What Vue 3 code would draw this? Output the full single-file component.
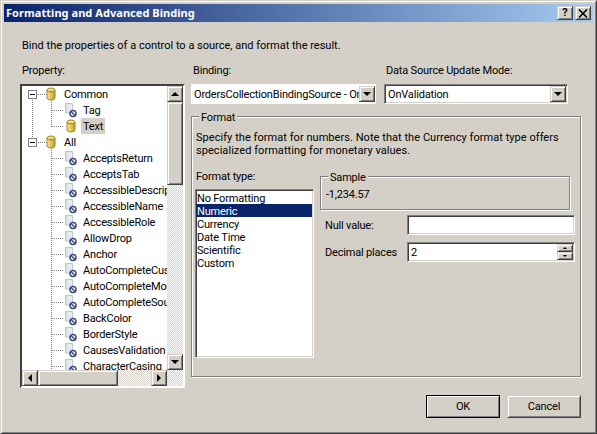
<template>
  <div class="dialog">
    <div class="titlebar">
      <span class="title">Formatting and Advanced Binding</span>
      <div class="title-btns">
        <button class="cap-btn raised">?</button>
        <button class="cap-btn raised">
          <svg width="10" height="9" viewBox="0 0 10 9"><path d="M1 0.5 L9 8.5 M9 0.5 L1 8.5" stroke="#000" stroke-width="1.6" /></svg>
        </button>
      </div>
    </div>

    <p class="intro">Bind the properties of a control to a source, and format the result.</p>

    <div class="columns">
      <div class="prop-col">
        <div class="lbl">Property:</div>
        <div class="tree-box sunken">
          <div class="tree">
            <div v-for="row in rows" :key="row.name" class="tree-row">
              <svg class="row-art" :width="row.depth ? 59 : 40" height="16">
                <!-- outer guide for the Common group -->
                <path v-if="row.outer" d="M10.5 0 V16" class="guide" />
                <template v-if="row.depth === 0">
                  <path d="M16 8.5 H25" class="guide" />
                  <path v-if="row.name === 'Common'" d="M10.5 12 V16" class="guide" />
                  <path v-if="row.name === 'All'" d="M10.5 0 V5" class="guide" />
                  <path d="M29.5 14 V16" class="guide" />
                  <rect x="6.5" y="4.5" width="8" height="8" fill="#fff" stroke="#808080" />
                  <path d="M8 8.5 H13" stroke="#000" />
                  <ellipse cx="29" cy="4" rx="4" ry="2" fill="#f3dc7a" stroke="#a08a30" />
                  <path d="M25 4 V12 A4 2 0 0 0 33 12 V4 A4 2 0 0 1 25 4 Z" fill="url(#gold)" stroke="#a08a30" />
                </template>
                <template v-else>
                  <path :d="row.last ? 'M29.5 0 V8.5' : 'M29.5 0 V16'" class="guide" />
                  <path d="M30 8.5 H42" class="guide" />
                  <template v-if="row.db">
                    <ellipse cx="49" cy="4" rx="4" ry="2" fill="#f3dc7a" stroke="#a08a30" />
                    <path d="M45 4 V12 A4 2 0 0 0 53 12 V4 A4 2 0 0 1 45 4 Z" fill="url(#gold)" stroke="#a08a30" />
                  </template>
                  <template v-else>
                    <path d="M43.5 1.5 H50.5 V11 H43.5 Z" fill="#e9ebf2" stroke="#c0c4d0" />
                    <path d="M45 2 V11" stroke="#ccd0da" />
                    <circle cx="51" cy="11.5" r="3" fill="#fff" stroke="#3c4a84" stroke-width="1.5" />
                    <path d="M49 9.5 L53 13.5" stroke="#3c4a84" stroke-width="1.4" />
                  </template>
                </template>
                <defs>
                  <linearGradient id="gold" x1="0" x2="1" y1="0" y2="0">
                    <stop offset="0" stop-color="#f8e88e" />
                    <stop offset="0.6" stop-color="#e2c04a" />
                    <stop offset="1" stop-color="#b8962c" />
                  </linearGradient>
                </defs>
              </svg>
              <span class="row-name" :class="{ selected: row.selected }">{{ row.name }}</span>
            </div>
          </div>

          <div class="vscroll dither">
            <button class="sb-btn raised"><i class="arrow up"></i></button>
            <div class="vthumb raised"></div>
            <div class="spacer"></div>
            <button class="sb-btn raised"><i class="arrow down"></i></button>
          </div>
          <div class="hscroll dither">
            <button class="sb-btn raised"><i class="arrow left"></i></button>
            <div class="hthumb raised"></div>
            <div class="spacer"></div>
            <button class="sb-btn raised"><i class="arrow right"></i></button>
          </div>
          <div class="corner dither"></div>
        </div>
      </div>

      <div class="right-col">
        <div class="top-row">
          <div class="binding-field">
            <div class="lbl">Binding:</div>
            <div class="combo flat">
              <span class="combo-text">OrdersCollectionBindingSource - Or</span>
              <button class="combo-btn raised"><i class="arrow down"></i></button>
            </div>
          </div>
          <div class="mode-field">
            <div class="lbl">Data Source Update Mode:</div>
            <div class="combo sunken">
              <span class="combo-text">OnValidation</span>
              <button class="combo-btn raised"><i class="arrow down"></i></button>
            </div>
          </div>
        </div>

        <div class="group format-group">
          <span class="group-title">Format</span>
          <p class="format-text">
            Specify the format for numbers. Note that the Currency format type offers<br />
            specialized formatting for monetary values.
          </p>
          <div class="format-row">
            <div class="type-col">
              <div class="type-lbl">Format type:</div>
              <ul class="type-list sunken">
                <li v-for="t in types" :key="t" :class="{ active: t === 'Numeric' }">{{ t }}</li>
              </ul>
            </div>
            <div class="detail-col">
              <div class="group sample-group">
                <span class="group-title">Sample</span>
                <div class="sample-val">-1,234.57</div>
              </div>
              <div class="field-row">
                <span class="field-lbl">Null value:</span>
                <div class="input sunken"></div>
              </div>
              <div class="field-row">
                <span class="field-lbl">Decimal places</span>
                <div class="input sunken spin-input">
                  <span class="spin-val">2</span>
                  <div class="spin">
                    <button class="spin-btn raised"><i class="arrow tiny-up"></i></button>
                    <button class="spin-btn raised"><i class="arrow tiny-down"></i></button>
                  </div>
                </div>
              </div>
            </div>
          </div>
        </div>
      </div>
    </div>

    <div class="footer">
      <button class="btn raised default">OK</button>
      <button class="btn raised">Cancel</button>
    </div>
  </div>
</template>

<script setup>
const names = [
  'AcceptsReturn',
  'AcceptsTab',
  'AccessibleDescrip',
  'AccessibleName',
  'AccessibleRole',
  'AllowDrop',
  'Anchor',
  'AutoCompleteCus',
  'AutoCompleteMod',
  'AutoCompleteSou',
  'BackColor',
  'BorderStyle',
  'CausesValidation',
  'CharacterCasing',
];

const rows = [
  { name: 'Common', depth: 0 },
  { name: 'Tag', depth: 1, outer: true },
  { name: 'Text', depth: 1, outer: true, last: true, db: true, selected: true },
  { name: 'All', depth: 0 },
  ...names.map((name) => ({ name, depth: 1 })),
];

const types = ['No Formatting', 'Numeric', 'Currency', 'Date Time', 'Scientific', 'Custom'];
</script>

<style>
html,
body {
  margin: 0;
  background: #d4d0c8;
}
</style>

<style scoped>
.dialog {
  box-sizing: border-box;
  width: 597px;
  height: 434px;
  padding: 3px;
  background: #d4d0c8;
  border: 1px solid;
  border-color: #d4d0c8 #404040 #404040 #d4d0c8;
  box-shadow: inset 1px 1px #fff, inset -1px -1px #808080;
  font-family: Roboto, 'Liberation Sans', sans-serif;
  font-size: 11px;
  letter-spacing: -0.18px;
  line-height: 14px;
  color: #000;
  overflow: hidden;
}

button {
  padding: 0;
  margin: 0;
  font: inherit;
  letter-spacing: inherit;
  color: inherit;
  background: #d4d0c8;
}

.raised {
  box-sizing: border-box;
  border: 1px solid;
  border-color: #d4d0c8 #404040 #404040 #d4d0c8;
  box-shadow: inset 1px 1px #fff, inset -1px -1px #808080;
}

.sunken {
  box-sizing: border-box;
  border: 1px solid;
  border-color: #808080 #fff #fff #808080;
  box-shadow: inset 1px 1px #404040, inset -1px -1px #d4d0c8;
  background: #fff;
}

.dither {
  background: repeating-conic-gradient(#fff 0 25%, #d4d0c8 0 50%) 0 0 / 2px 2px;
}

.titlebar {
  display: flex;
  align-items: center;
  justify-content: space-between;
  height: 18px;
  padding: 0 2px;
  background: linear-gradient(90deg, #0a246a, #a6caf0);
  color: #fff;
}

.title {
  font-family: 'Noto Sans', sans-serif;
  font-weight: 700;
  letter-spacing: 0.05px;
}

.title-btns {
  display: flex;
  gap: 2px;
}

.cap-btn {
  display: flex;
  align-items: center;
  justify-content: center;
  width: 16px;
  height: 14px;
  font-weight: 700;
  color: #000;
}

.intro {
  margin: 17px 0 10px 18px;
  letter-spacing: 0;
}

.columns {
  display: flex;
  gap: 6px;
  margin-left: 16px;
}

.prop-col {
  width: 165px;
}

.lbl {
  padding: 1px 0 0 2px;
  margin-bottom: 6px;
}

.tree-box {
  display: grid;
  grid-template-columns: 145px 16px;
  grid-template-rows: 284px 16px;
  width: 165px;
  height: 304px;
  border-width: 2px;
  border-style: solid;
  border-color: #404040 #fff #fff #404040;
  box-shadow: none;
}

.tree {
  overflow: hidden;
}

.tree-row {
  display: flex;
  align-items: center;
  height: 16px;
  white-space: nowrap;
}

.row-art {
  flex: none;
}

.guide {
  fill: none;
  stroke: #808080;
  stroke-dasharray: 1 1;
  shape-rendering: crispEdges;
}

.row-name {
  padding: 2px 2px 0;
}

.row-name.selected {
  background: #d4d0c8;
}

.vscroll,
.hscroll {
  display: flex;
}

.vscroll {
  flex-direction: column;
}

.spacer {
  flex: 1;
}

.sb-btn {
  display: flex;
  align-items: center;
  justify-content: center;
  flex: none;
  width: 16px;
  height: 16px;
}

.vthumb {
  height: 83px;
  background: #d4d0c8;
}

.hthumb {
  width: 80px;
  background: #d4d0c8;
}

.arrow {
  display: block;
  width: 0;
  height: 0;
  border-style: solid;
  border-color: transparent;
}

.arrow.up {
  border-width: 0 4px 4px;
  border-bottom-color: #000;
}

.arrow.down {
  border-width: 4px 4px 0;
  border-top-color: #000;
}

.arrow.left {
  border-width: 4px 4px 4px 0;
  border-right-color: #000;
}

.arrow.right {
  border-width: 4px 0 4px 4px;
  border-left-color: #000;
}

.arrow.tiny-up {
  border-width: 0 2px 2px;
  border-bottom-color: #000;
}

.arrow.tiny-down {
  border-width: 2px 2px 0;
  border-top-color: #000;
}

.right-col {
  width: 390px;
}

.top-row {
  display: flex;
  gap: 8px;
  margin-bottom: 12px;
}

.binding-field {
  width: 185px;
}

.mode-field {
  width: 184px;
}

.combo {
  display: flex;
  align-items: center;
  justify-content: space-between;
  height: 20px;
  padding: 2px 1px 2px 3px;
  box-sizing: border-box;
}

.combo.flat {
  background: #fff;
}

.combo-text {
  flex: 1;
  min-width: 0;
  padding-top: 2px;
  overflow: hidden;
  white-space: nowrap;
}

.combo-btn {
  display: flex;
  align-items: center;
  justify-content: center;
  flex: none;
  width: 16px;
  height: 16px;
}

.group {
  position: relative;
  box-sizing: border-box;
  border: 1px solid #808080;
  box-shadow: 1px 1px #fff, inset 1px 1px #fff;
}

.group-title {
  position: absolute;
  top: -6px;
  left: 7px;
  padding: 0 2px;
  background: #d4d0c8;
}

.format-group {
  height: 261px;
  padding: 14px 3px 0;
}

.format-text {
  margin: 0 0 12px 1px;
  line-height: 13px;
  letter-spacing: 0.05px;
}

.format-row {
  display: flex;
  gap: 6px;
}

.type-col {
  width: 119px;
}

.type-lbl {
  padding: 1px 0 0 1px;
  margin-bottom: 5px;
}

.type-list {
  list-style: none;
  margin: 0;
  padding: 1px 1px 1px 0;
  height: 169px;
}

.type-list li {
  height: 13px;
  padding-left: 1px;
  line-height: 15px;
}

.type-list li.active {
  background: #0a246a;
  color: #fff;
}

.detail-col {
  width: 255px;
  padding-top: 7px;
}

.sample-group {
  width: 250px;
  height: 34px;
  padding: 11px 5px 0;
  margin-bottom: 5px;
}

.field-row {
  display: flex;
  align-items: center;
  height: 20px;
  margin-bottom: 7px;
  padding-left: 5px;
}

.field-lbl {
  width: 82px;
  padding-top: 2px;
}

.input {
  width: 168px;
  height: 20px;
}

.spin-input {
  display: flex;
  align-items: center;
  justify-content: space-between;
  padding: 2px 1px 2px 3px;
}

.spin-val {
  padding-top: 2px;
}

.spin {
  display: flex;
  flex-direction: column;
  width: 16px;
}

.spin-btn {
  display: flex;
  align-items: center;
  justify-content: center;
  height: 8px;
}

.footer {
  display: flex;
  justify-content: flex-end;
  gap: 7px;
  margin-top: 7px;
  padding-right: 12px;
}

.btn {
  width: 74px;
  height: 23px;
  padding-top: 1px;
}

.btn.default {
  outline: 1px solid #000;
  outline-offset: -1px;
}
</style>
